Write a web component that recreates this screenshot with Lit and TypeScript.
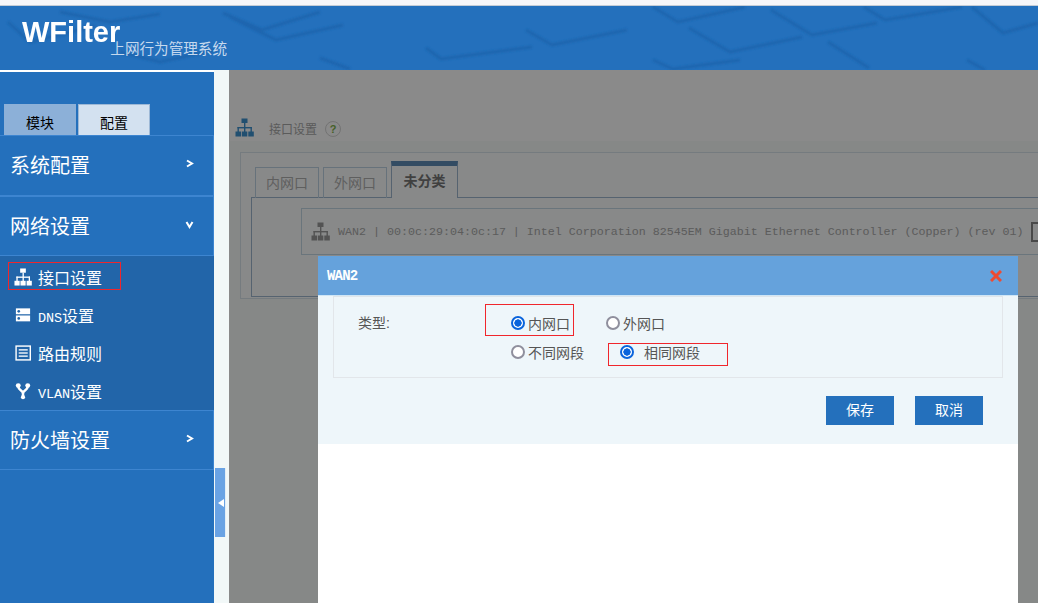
import { LitElement, html, css, svg } from "lit";
import { customElement } from "lit/decorators.js";

const CJK = `"Liberation Sans", "Noto Sans CJK SC", sans-serif`;
const MONO = `"Liberation Mono", "Noto Sans CJK SC", monospace`;

const treeIcon = html`<svg class="ico" viewBox="0 0 19 19" aria-hidden="true"><g fill="currentColor"><rect x="6.5" y="0.5" width="6" height="4.5"/><rect x="9" y="5" width="1.4" height="9"/><rect x="2.5" y="9" width="14.4" height="1.4"/><rect x="2.5" y="9" width="1.4" height="5"/><rect x="15.5" y="9" width="1.4" height="5"/><rect x="0.5" y="13.5" width="5.5" height="5"/><rect x="6.8" y="13.5" width="5.5" height="5"/><rect x="13.3" y="13.5" width="5.5" height="5"/></g></svg>`;

const serverIcon = html`<svg class="ico" viewBox="0 0 19 19" aria-hidden="true"><g fill="currentColor"><rect x="2" y="2.5" width="15" height="6.2"/><rect x="2" y="10" width="15" height="6.2"/></g><circle cx="5" cy="5.6" r="1.4" fill="#2265a9"/><circle cx="5" cy="13.1" r="1.4" fill="#2265a9"/></svg>`;

const listIcon = html`<svg class="ico" viewBox="0 0 19 19" aria-hidden="true"><rect x="2.2" y="2.2" width="15" height="14.6" fill="none" stroke="currentColor" stroke-width="1.5"/><g fill="currentColor"><rect x="5" y="5.5" width="9.5" height="1.4"/><rect x="5" y="8.8" width="9.5" height="1.4"/><rect x="5" y="12.1" width="9.5" height="1.4"/></g></svg>`;

const forkIcon = html`<svg class="ico" viewBox="0 0 19 19" aria-hidden="true"><g fill="none" stroke="currentColor" stroke-width="2.6" stroke-linecap="round"><path d="M4.5 4.5 C4.5 9 9.5 9 9.5 12 L9.5 16"/><path d="M14.5 4.5 C14.5 9 9.5 9 9.5 12"/></g><g fill="currentColor"><circle cx="4.5" cy="3.8" r="2.6"/><circle cx="14.5" cy="3.8" r="2.6"/><circle cx="9.5" cy="16" r="2.2"/></g></svg>`;

const streaks: string[] = [
  "230,17 276,40 343,25", "526,30 552,45 627,30", "426,48 441,59 532,47", "689,28 730,52 802,37",
  "653,7 678,22 745,7", "771,10 812,35 877,23", "864,7 885,20 962,7", "972,7 1003,33 1038,23",
  "828,42 869,68", "653,60 673,69 740,60", "967,60 985,70", "8,22 30,42 95,26", "223,13 262,30 320,12",
  "120,52 160,62 215,50", "60,12 110,22 160,14", "320,58 350,69",
];

@customElement("app-root")
export class AppRoot extends LitElement {
  static styles = css`
    :host { display: block; width: 1038px; height: 603px; overflow: hidden; position: relative; font-family: ${css([CJK] as any as string) && css``}"Liberation Sans", "Noto Sans CJK SC", sans-serif; background: #f2f8f8; }
    .top { height: 5px; background: #f6f6f9; border-bottom: 1px solid #c4ccd6; }
    header { position: relative; height: 64px; background: #2470bc; overflow: hidden; display: flex; align-items: flex-start; }
    .pattern { position: absolute; left: 0; top: -6px; width: 1038px; height: 70px; }
    .brand { position: relative; display: flex; align-items: flex-start; padding-left: 22px; }
    .brand b { font-size: 29px; line-height: 32px; margin-top: 10px; color: #fff; letter-spacing: 0; font-weight: 700; filter: blur(0.3px); }
    .brand span { font-size: 14.6px; line-height: 18px; margin: 34px 0 0 -10px; color: #c6d9ee; white-space: nowrap; }
    .body { display: grid; grid-template-columns: 214px 15px 1fr; height: 533px; }
    aside { background: #2470bc; border-top: 2px solid #fff; padding-top: 32px; box-sizing: border-box; height: 533px; }
    .tabs { display: flex; gap: 2px; padding-left: 4px; height: 31px; }
    .tabs span { width: 72px; box-sizing: border-box; border: 1px solid #9db8d6; border-bottom: 0; font-size: 14px; line-height: 36px; text-align: center; color: #000; background: #d3e1f0; }
    .tabs span.off { background: #8cb0d8; border-color: #8cb0d8; }
    .group { display: flex; align-items: center; justify-content: space-between; box-sizing: border-box; width: 213.5px; height: 61px; border: 1px solid #3d85d0; border-left: 0; padding: 0 19px 2px 10px; font-size: 20px; color: #fff; }
    .group.second { height: 60px; margin-top: 0; }
    .group svg { width: 9px; height: 9px; fill: none; stroke: #fff; stroke-width: 2; margin-top: -2px; }
    .sub { background: #2265a9; padding-top: 2px; height: 154px; box-sizing: border-box; }
    .item { position: relative; display: flex; align-items: center; height: 38px; padding-left: 14px; gap: 6px; color: #fff; font-size: 16px; }
    .item .ico { width: 18px; height: 18px; flex: none; color: #fff; }
    .item .latin { font-family: "Liberation Mono", monospace; font-size: 13.5px; letter-spacing: -0.1px; }
    .mark { position: absolute; border: 1px solid #f0262c; box-sizing: border-box; pointer-events: none; }
    .m1 { left: 8px; top: 4px; width: 113px; height: 28px; }
    .gutter { position: relative; border-top: 0; display: flex; flex-direction: column; padding: 470px 0 0 1px; box-sizing: border-box; background: #f2f8f8; }
    .handle { width: 10px; height: 69px; background: #6aa3e4; display: flex; align-items: center; justify-content: center; margin-top: -72px; border-right: 1px solid #e2edf6; }
    .handle i { width: 0; height: 0; border: 4.5px solid transparent; border-right: 6px solid #fff; border-left: 0; margin-left: 1px; }
    main { background: #fff; border-left: 1px solid #fff; border-top: 1px solid #fff; overflow: hidden; color: #999; min-width: 0; }
    .title { display: flex; align-items: center; height: 70px; padding: 45px 0 0 5px; box-sizing: border-box; gap: 15px; font-size: 12px; }
    .title .ico { width: 19px; height: 19px; color: #3d92cf; margin-top: -2px; flex: none; }
    .title span { color: #a8a8a8; margin-right: -7px; }
    .q { width: 14px; height: 14px; border: 1px solid #d4d4d4; border-radius: 50%; color: #7fb24c; font-weight: 700; font-size: 11px; line-height: 14px; text-align: center; box-sizing: content-box; }
    .wrap { background: #f8fbfa; height: 462px; padding: 11px 0 0 10px; }
    .panel { width: 1000px; height: 147px; box-sizing: border-box; border: 1px solid #d8e4ea; background: #fbfdfd; padding: 8px 0 0 10px; }
    .tabbar { display: flex; align-items: flex-end; gap: 4px; height: 37px; padding-left: 4px; margin-bottom: -1px; position: relative; }
    .tab { width: 64px; height: 31px; box-sizing: border-box; border: 1px solid #bfd3e4; border-bottom: 0; text-align: center; font-size: 14px; line-height: 30px; color: #b0b0b0; }
    .tab.on { width: 67px; height: 37px; border: 1px solid #9fb8d0; border-bottom: 0; border-top: 5px solid #5f8db8; background: #fbfdfd; color: #777; font-weight: 700; line-height: 30px; position: relative; }
    .tabbody { border: 1px solid #9fb8d0; height: 100px; box-sizing: border-box; padding: 10px 0 0 49px; }
    .row { display: flex; align-items: center; gap: 8px; height: 47px; width: 1000px; box-sizing: border-box; border: 1px solid #c5d8e6; padding-left: 9px; white-space: nowrap; font-family: ${css``}"Liberation Mono", "Noto Sans CJK SC", monospace; font-size: 11.67px; color: #aaa; }
    .row .ico { width: 19px; height: 19px; color: #999; flex: none; }
    .check { display: inline-block; width: 14px; height: 16px; border: 2px solid #888; margin-left: -1px; }
    .dim { position: absolute; left: 229px; right: 0; top: 70px; bottom: 0; background: rgba(0, 0, 0, 0.46); }
    .modal { position: absolute; left: 318px; top: 256px; width: 700px; height: 347px; background: #fff; }
    .mhead { display: flex; align-items: center; justify-content: space-between; height: 40px; padding: 0 16px 0 9px; box-sizing: border-box; background: #65a2dc; border-bottom: 1px solid #cfe6f6; color: #fff; font-family: "Liberation Mono", monospace; font-weight: 700; font-size: 14px; letter-spacing: -0.8px; }
    .mhead svg { width: 12px; height: 12px; stroke: #ee4b32; stroke-width: 3; fill: none; }
    .mbody { position: relative; background: #eef6fa; height: 148px; padding: 0 15px; box-sizing: border-box; }
    fieldset { all: unset; display: grid; box-sizing: border-box; width: 670px; height: 82px; border: 1px solid #e2e6ea; border-top: 1px solid #dfe5ea; grid-template-columns: 153px 1fr; color: #555; font-size: 14px; }
    .lab { padding: 16px 0 0 24px; line-height: 20px; }
    .opts { display: flex; flex-direction: column; gap: 9px; padding-top: 16px; padding-left: 24px; }
    .opts div { display: flex; align-items: center; height: 20px; }
    .r { display: inline-flex; align-items: center; gap: 3px; white-space: nowrap; }
    .r i { width: 14px; height: 14px; border-radius: 50%; box-sizing: border-box; border: 2px solid #8f8f9d; background: #fff; flex: none; }
    .r.on i { border-color: #0a64dc; background: radial-gradient(circle, #0a64dc 0 3.4px, #fff 3.9px); }
    .r.a2 { margin-left: 36px; }
    .r.b2 { margin-left: 36px; gap: 10px; }
    .m2 { left: 167px; top: 8px; width: 89px; height: 32px; }
    .m3 { left: 290px; top: 47px; width: 120px; height: 23px; }
    .acts { display: flex; justify-content: flex-end; gap: 21px; padding: 18px 20px 0 0; }
    button { all: unset; width: 68px; height: 29px; background: #2470bc; color: #fff; font-size: 14px; text-align: center; line-height: 29px; font-family: inherit; }
  `;

  render() {
    const chevR = html`<svg viewBox="0 0 9 9"><polyline points="2,1.5 7,4.5 2,7.5"/></svg>`;
    const chevD = html`<svg viewBox="0 0 9 9"><polyline points="1.5,2 4.5,7 7.5,2"/></svg>`;
    return html`
      <div class="top"></div>
      <header>
        <svg class="pattern" viewBox="0 0 1038 70" aria-hidden="true">
          <defs><filter id="b"><feGaussianBlur stdDeviation="1"/></filter></defs>
          <g fill="none" stroke="#1c62aa" stroke-width="3" filter="url(#b)" opacity="0.75">
            ${streaks.map((p) => svg`<polyline points=${p}/>`)}
          </g>
        </svg>
        <div class="brand"><b>WFilter</b><span>上网行为管理系统</span></div>
      </header>
      <div class="body">
        <aside>
          <div class="tabs"><span class="off">模块</span><span>配置</span></div>
          <div class="group"><span>系统配置</span>${chevR}</div>
          <div class="group second"><span>网络设置</span>${chevD}</div>
          <div class="sub">
            <div class="item">${treeIcon}<span>接口设置</span><span class="mark m1"></span></div>
            <div class="item">${serverIcon}<span><span class="latin">DNS</span>设置</span></div>
            <div class="item">${listIcon}<span>路由规则</span></div>
            <div class="item">${forkIcon}<span><span class="latin">VLAN</span>设置</span></div>
          </div>
          <div class="group second"><span>防火墙设置</span>${chevR}</div>
        </aside>
        <div class="gutter"><div class="handle"><i></i></div></div>
        <main>
          <div class="title">${treeIcon}<span>接口设置</span><div class="q">?</div></div>
          <div class="wrap">
            <div class="panel">
              <div class="tabbar">
                <div class="tab">内网口</div>
                <div class="tab">外网口</div>
                <div class="tab on">未分类</div>
              </div>
              <div class="tabbody">
                <div class="row">${treeIcon}<span>WAN2 | 00:0c:29:04:0c:17 | Intel Corporation 82545EM Gigabit Ethernet Controller (Copper) (rev 01)</span><i class="check"></i></div>
              </div>
            </div>
          </div>
        </main>
      </div>
      <div class="dim"></div>
      <div class="modal">
        <div class="mhead"><span>WAN2</span><svg viewBox="0 0 12 12"><path d="M1 1 L11 11 M11 1 L1 11"/></svg></div>
        <div class="mbody">
          <fieldset>
            <div class="lab">类型:</div>
            <div class="opts">
              <div>
                <label class="r on"><i></i>内网口</label>
                <label class="r a2"><i></i>外网口</label>
              </div>
              <div>
                <label class="r"><i></i>不同网段</label>
                <label class="r on b2"><i></i>相同网段</label>
              </div>
            </div>
          </fieldset>
          <span class="mark m2"></span>
          <span class="mark m3"></span>
          <div class="acts"><button>保存</button><button>取消</button></div>
        </div>
      </div>
    `;
  }
}
